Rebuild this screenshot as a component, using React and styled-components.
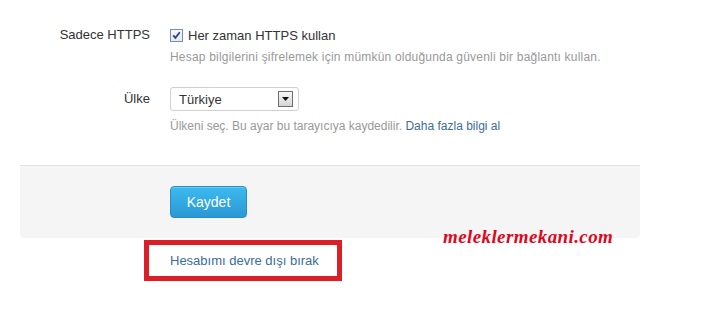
import React from "react";
import styled, { createGlobalStyle } from "styled-components";

const Global = createGlobalStyle`
  html, body { margin: 0; padding: 0; background: #fff; }
  body { font-family: "Liberation Sans", Arial, sans-serif; color: #333; }
`;

const Page = styled.div`
  position: relative;
  width: 714px;
  height: 311px;
  overflow: hidden;
  padding: 25px 0 0 20px;
  box-sizing: border-box;
`;

const Form = styled.div`
  width: 620px;
  display: flex;
  flex-direction: column;
`;

const Row = styled.div`
  display: grid;
  grid-template-columns: 130px 1fr;
  column-gap: 20px;
  margin-top: ${(p) => p.$top || 0}px;
`;

const Label = styled.div`
  text-align: right;
  font-size: 13px;
  line-height: ${(p) => p.$lh || 20}px;
  color: #333;
`;

const Controls = styled.div`
  display: flex;
  flex-direction: column;
`;

const CheckLine = styled.label`
  display: flex;
  align-items: center;
  height: 20px;
  font-size: 13px;
  color: #333;
  gap: 5px;
`;

const Box = styled.span`
  width: 11px;
  height: 11px;
  border: 1px solid #7a8ea6;
  background: linear-gradient(#f4f6f8, #e4e9ef);
  display: inline-flex;
  align-items: center;
  justify-content: center;
  margin-top: 1px;
`;

const Hint = styled.div`
  font-size: 12px;
  line-height: 16px;
  color: #999;
  letter-spacing: ${(p) => p.$spacing || 0}px;
  margin-top: ${(p) => p.$top || 0}px;
`;

const Link = styled.a`
  color: #3a6d9a;
  text-decoration: none;
`;

const Select = styled.div`
  width: 129px;
  height: 24px;
  box-sizing: border-box;
  border: 1px solid #d0d0d0;
  border-radius: 3px;
  background: #fff;
  display: flex;
  align-items: center;
  justify-content: space-between;
  padding: 0 5px 0 8px;
  font-size: 13px;
  color: #333;
`;

const Arrow = styled.span`
  width: 13px;
  height: 14px;
  border: 1px solid #6e6e6e;
  background: linear-gradient(#f8f8f8, #d6d6d6);
  display: inline-flex;
  align-items: center;
  justify-content: center;
`;

const Panel = styled.div`
  margin-top: 31px;
  border-top: 1px solid #e1e1e1;
  background: #f5f5f5;
  border-radius: 0 0 4px 4px;
  padding: 20px 0 20px 150px;
  display: flex;
`;

const Button = styled.button`
  width: 77px;
  height: 32px;
  border: 1px solid #2a8ccb;
  border-radius: 4px;
  background: linear-gradient(#3cbaee, #2a98d4);
  color: #fff;
  font-family: "Liberation Sans", Arial, sans-serif;
  font-size: 14px;
  padding: 0;
  box-shadow: inset 0 1px 0 rgba(255,255,255,0.25);
`;

const Deactivate = styled.div`
  margin: 2px 0 0 124px;
  width: 167px;
  height: 31px;
  border: 5px solid #dc1f26;
  display: flex;
  align-items: center;
  padding-left: 21px;
  font-size: 13px;
  box-sizing: content-box;
`;

const Watermark = styled.div`
  position: absolute;
  left: 443px;
  top: 227px;
  font-family: "Liberation Serif", "Times New Roman", serif;
  font-style: italic;
  font-weight: bold;
  font-size: 19px;
  line-height: 19px;
  letter-spacing: 0.4px;
  color: #e0061c;
  white-space: nowrap;
`;

export default function App() {
  return (
    <>
      <Global />
      <Page>
        <Form>
          <Row>
            <Label>Sadece HTTPS</Label>
            <Controls>
              <CheckLine>
                <Box>
                  <svg width="9" height="9" viewBox="0 0 9 9">
                    <path d="M1.2 4.4 L3.4 6.8 L7.8 1.2" fill="none" stroke="#2b3f8c" strokeWidth="1.8" />
                  </svg>
                </Box>
                Her zaman HTTPS kullan
              </CheckLine>
              <Hint $top={4} $spacing={0.2}>
                Hesap bilgilerini şifrelemek için mümkün olduğunda güvenli bir bağlantı kullan.
              </Hint>
            </Controls>
          </Row>
          <Row $top={22}>
            <Label $lh={24}>Ülke</Label>
            <Controls>
              <Select>
                <span>Türkiye</span>
                <Arrow>
                  <svg width="7" height="4" viewBox="0 0 7 4">
                    <path d="M0 0 L7 0 L3.5 4 Z" fill="#111" />
                  </svg>
                </Arrow>
              </Select>
              <Hint $top={7}>
                Ülkeni seç. Bu ayar bu tarayıcıya kaydedilir. <Link href="#">Daha fazla bilgi al</Link>
              </Hint>
            </Controls>
          </Row>
          <Panel>
            <Button>Kaydet</Button>
          </Panel>
          <Deactivate>
            <Link href="#">Hesabımı devre dışı bırak</Link>
          </Deactivate>
        </Form>
        <Watermark>meleklermekani.com</Watermark>
      </Page>
    </>
  );
}
